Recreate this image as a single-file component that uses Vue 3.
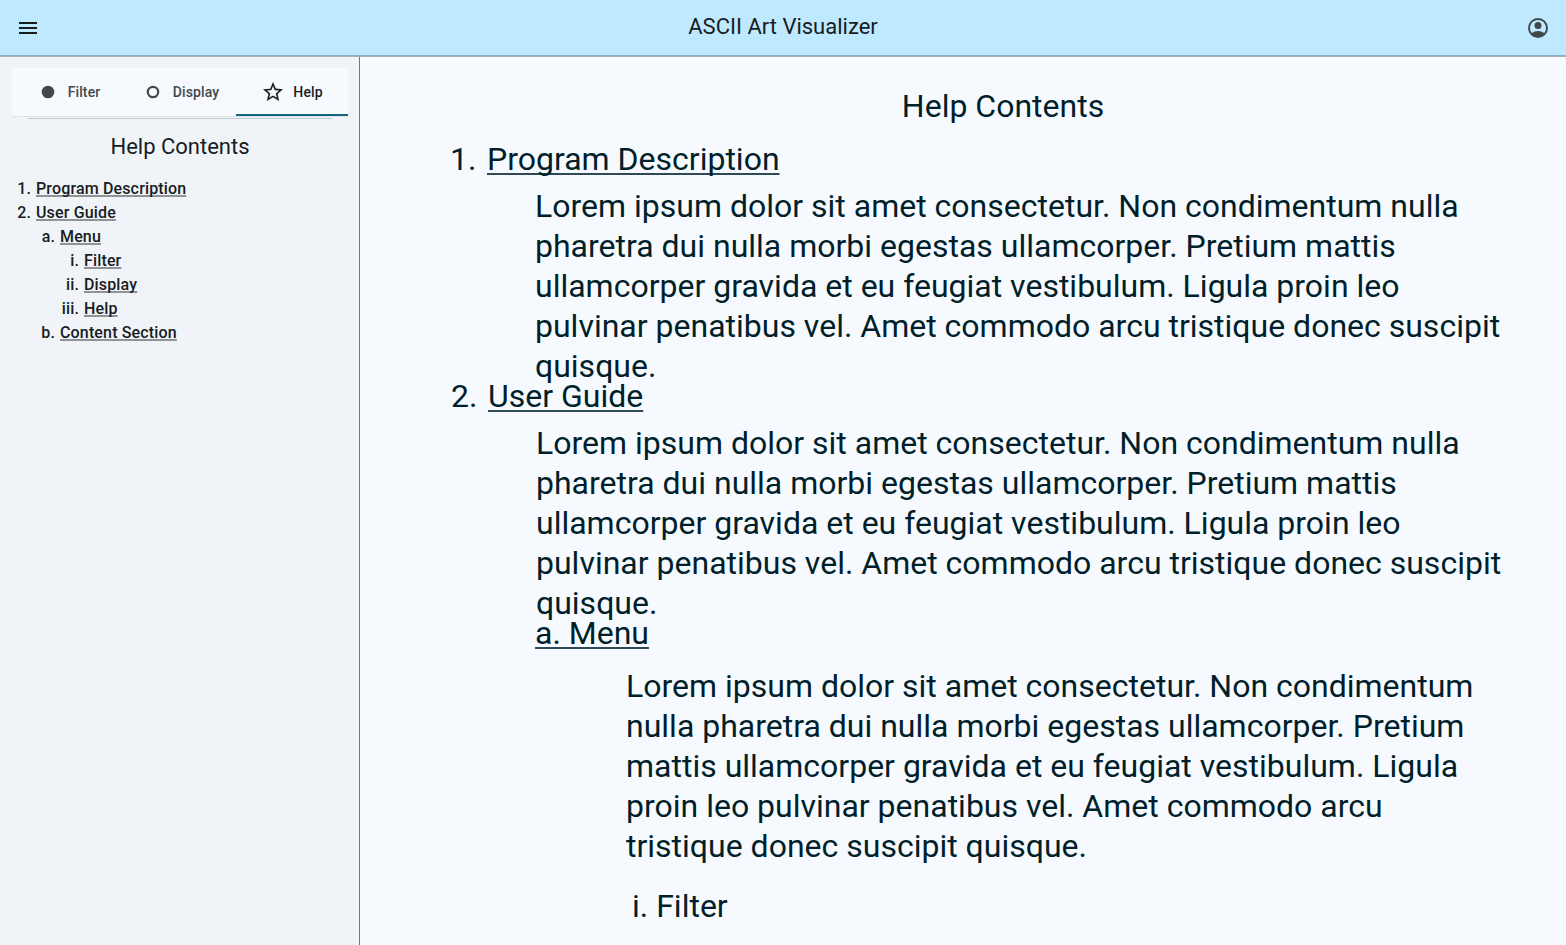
<script setup>
const p = [
  'Lorem ipsum dolor sit amet consectetur. Non condimentum nulla',
  'pharetra dui nulla morbi egestas ullamcorper. Pretium mattis',
  'ullamcorper gravida et eu feugiat vestibulum. Ligula proin leo',
  'pulvinar penatibus vel. Amet commodo arcu tristique donec suscipit',
  'quisque.'
]
const q = [
  'Lorem ipsum dolor sit amet consectetur. Non condimentum',
  'nulla pharetra dui nulla morbi egestas ullamcorper. Pretium',
  'mattis ullamcorper gravida et eu feugiat vestibulum. Ligula',
  'proin leo pulvinar penatibus vel. Amet commodo arcu',
  'tristique donec suscipit quisque.'
]
const toc = [
  { n: '1.', t: 'Program Description', w: 36 },
  { n: '2.', t: 'User Guide', w: 36 },
  { n: 'a.', t: 'Menu', w: 60 },
  { n: 'i.', t: 'Filter', w: 84 },
  { n: 'ii.', t: 'Display', w: 84 },
  { n: 'iii.', t: 'Help', w: 84 },
  { n: 'b.', t: 'Content Section', w: 60 }
]
</script>

<template>
  <div class="page">
    <header class="bar">
      <svg class="icon" viewBox="0 0 24 24"><path d="M3 18h18v-2H3v2zm0-5h18v-2H3v2zm0-7v2h18V6H3z" /></svg>
      <h1 class="title">ASCII Art Visualizer</h1>
      <svg class="icon user" viewBox="0 0 24 24"><path fill-rule="evenodd" d="M12 2a10 10 0 1 0 0 20 10 10 0 0 0 0-20zM18.14 17.12C16.45 15.8 14.32 15 12 15s-4.45.8-6.14 2.12A7.95 7.95 0 0 1 4 12c0-4.42 3.58-8 8-8s8 3.58 8 8c0 1.95-.7 3.73-1.86 5.12z" /><circle cx="12" cy="9.5" r="3.5" /></svg>
    </header>
    <div class="body">
      <aside class="side">
        <nav class="tabs">
          <div class="tab"><svg class="dot" viewBox="0 0 14 14"><circle cx="7" cy="7" r="6.3" fill="#40484c" /></svg><span>Filter</span></div>
          <div class="tab"><svg class="dot" viewBox="0 0 14 14"><circle cx="7" cy="7" r="5.2" fill="none" stroke="#40484c" stroke-width="2.2" /></svg><span>Display</span></div>
          <div class="tab active"><svg class="star" viewBox="0 0 24 24"><path d="M22 9.24l-7.19-.62L12 2 9.19 8.63 2 9.24l5.46 4.73L5.82 21 12 17.27 18.18 21l-1.63-7.03L22 9.24zM12 15.4l-3.76 2.27 1-4.28-3.32-2.88 4.38-.38L12 6.1l1.71 4.04 4.38.38-3.32 2.88 1 4.28L12 15.4z" /></svg><span>Help</span></div>
        </nav>
        <div class="rule"></div>
        <h2 class="side-title">Help Contents</h2>
        <div v-for="r in toc" :key="r.t" class="row">
          <span class="num" :style="{ width: r.w + 'px' }">{{ r.n }}</span><a>{{ r.t }}</a>
        </div>
      </aside>
      <main class="main">
        <h2 class="main-title">Help Contents</h2>
        <h3 class="head first"><span class="hn">1.</span><u>Program Description</u></h3>
        <p class="para"><span v-for="l in p" :key="l">{{ l }}</span></p>
        <h3 class="head second"><span class="hn">2.</span><u>User Guide</u></h3>
        <p class="para shifted"><span v-for="l in p" :key="l">{{ l }}</span></p>
        <h3 class="head sub"><u>a. Menu</u></h3>
        <p class="para deep"><span v-for="l in q" :key="l">{{ l }}</span></p>
        <h3 class="head leaf">i. Filter</h3>
      </main>
    </div>
  </div>
</template>

<style>
body { margin: 0; overflow: hidden; }
</style>

<style scoped>
.page { height: 945px; width: 1566px; box-sizing: border-box; overflow: hidden; display: flex; flex-direction: column; font-family: Roboto, sans-serif; color: #001f2a; background: #f6faff; }
h1, h2, h3, p { margin: 0; font-weight: 400; }
.bar { height: 57px; flex: none; box-sizing: border-box; background: #bfe9ff; border-bottom: 1px solid #abaeb4; box-shadow: inset 0 -1px #90afc0; display: flex; align-items: center; justify-content: space-between; padding: 0 16px; color: #171c1f; }
.icon { width: 24px; height: 24px; fill: #171c1f; }
.icon.user { fill: #40484c; }
.title { font-size: 22px; line-height: 28px; padding-bottom: 2px; }
.body { display: flex; flex: 1; min-height: 0; }
.side { width: 360px; flex: none; box-sizing: border-box; border-right: 1px solid #70787d; background: #f0f4f8; padding-top: 11px; color: #171c1f; }
.tabs { margin-left: 12px; width: 336px; height: 49px; box-sizing: border-box; background: #f6faff; border-bottom: 1px solid #dce3e9; display: flex; }
.tab { width: 112px; height: 48px; box-sizing: border-box; display: flex; align-items: center; justify-content: center; gap: 13px; padding-left: 5px; font-size: 14px; font-weight: 500; letter-spacing: 0.1px; color: #40484c; }
.tab.active { border-bottom: 2px solid #146683; color: #171c1f; gap: 8px; padding: 2px 0 0; }
.dot { width: 14px; height: 14px; }
.star { width: 24px; height: 24px; fill: #171c1f; }
.rule { width: 304px; height: 1px; margin: 1px 0 0 28px; background: #c0c8cd; }
.side-title { width: 360px; font-size: 22px; line-height: 28px; text-align: center; margin: 14px 0 16px; }
.row { display: flex; height: 24px; font-size: 16px; line-height: 24px; font-weight: 500; letter-spacing: 0.15px; }
.num { flex: none; box-sizing: border-box; padding-right: 5px; text-align: right; }
.row a, u { text-decoration: underline; text-decoration-skip-ink: none; text-decoration-thickness: 2px; }
.row a { text-decoration-color: #8f9396; text-underline-offset: 1px; }
u { text-decoration-color: #2f4a56; text-underline-offset: 3px; }
.main { width: 1206px; font-size: 32px; line-height: 40px; }
.main-title { font-size: 32px; text-align: center; margin: 29px 0 13px; padding-left: 80px; }
.head { font-size: 32px; line-height: 40px; display: flex; }
.first { padding-left: 90px; margin-bottom: 7px; }
.second { padding-left: 91px; margin: -10px 0 7px; }
.hn { width: 37px; }
.para { padding-left: 175px; }
.para span { display: block; white-space: nowrap; }
.para.shifted { padding-left: 176px; }
.sub { padding-left: 175px; margin: -10px 0 13px; }
.para.deep { padding-left: 266px; }
.leaf { padding-left: 272px; margin-top: 20px; }
</style>
